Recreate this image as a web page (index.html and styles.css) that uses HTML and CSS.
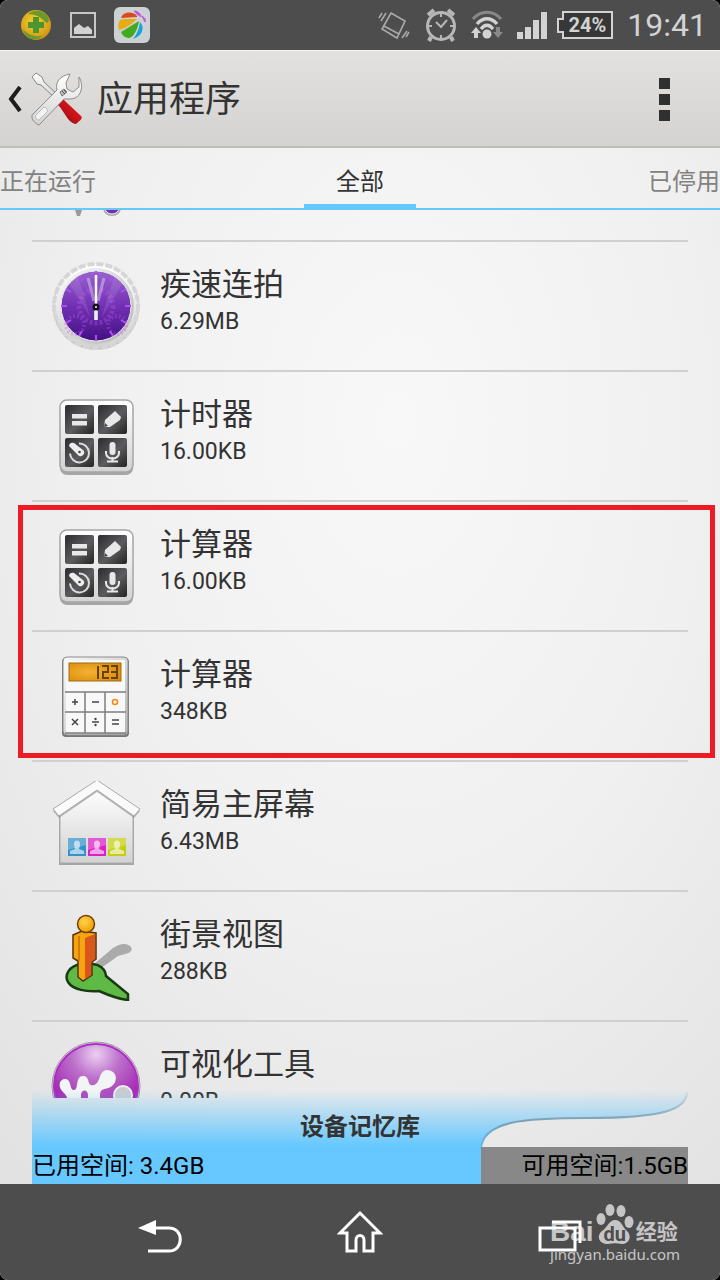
FILE: index.html
```html
<!DOCTYPE html>
<html lang="zh-CN">
<head>
<meta charset="utf-8">
<meta name="viewport" content="width=device-width, initial-scale=1">
<title>应用程序</title>
<link rel="stylesheet" href="styles.css">
</head>
<body>
<svg class="defs" width="0" height="0" aria-hidden="true">
  <defs>
    <linearGradient id="silver" x1="0" y1="0" x2="0" y2="1"><stop offset="0" stop-color="#fff"/><stop offset="1" stop-color="#d2d2d2"/></linearGradient>
    <linearGradient id="rim" x1="0" y1="0" x2="1" y2="1"><stop offset="0" stop-color="#fafafa"/><stop offset="1" stop-color="#b4b4b4"/></linearGradient>
    <linearGradient id="dark" x1="0" y1="0" x2="1" y2="1"><stop offset="0" stop-color="#2c2c2e"/><stop offset=".55" stop-color="#5c5c5e"/><stop offset="1" stop-color="#222"/></linearGradient>
    <linearGradient id="violet" x1="0" y1="0" x2="0" y2="1"><stop offset="0" stop-color="#9a63cf"/><stop offset=".5" stop-color="#7130b4"/><stop offset="1" stop-color="#431083"/></linearGradient>
    <radialGradient id="orb" cx=".5" cy=".12" r=".7"><stop offset="0" stop-color="#ecd0f0"/><stop offset=".4" stop-color="#bd72cb"/><stop offset="1" stop-color="#a01fae"/></radialGradient>
    <radialGradient id="lcd" cx=".4" cy=".5" r=".7"><stop offset="0" stop-color="#f2b234"/><stop offset="1" stop-color="#dd8b08"/></radialGradient>
    <radialGradient id="head" cx=".4" cy=".35" r=".7"><stop offset="0" stop-color="#ffd54a"/><stop offset="1" stop-color="#f09a00"/></radialGradient>
    <linearGradient id="red" x1="0" y1="1" x2="1" y2="0"><stop offset="0" stop-color="#7c0d10"/><stop offset=".6" stop-color="#d5141a"/><stop offset="1" stop-color="#95080d"/></linearGradient>
    <radialGradient id="gold" cx=".45" cy=".4" r=".6"><stop offset="0" stop-color="#f4d632"/><stop offset="1" stop-color="#d29414"/></radialGradient>
    <linearGradient id="water" x1="0" y1="0" x2="0" y2="1"><stop offset="0" stop-color="#66c8ff" stop-opacity="0"/><stop offset=".55" stop-color="#66c8ff" stop-opacity=".92"/><stop offset=".6" stop-color="#66c8ff"/><stop offset="1" stop-color="#66c8ff"/></linearGradient>
    <linearGradient id="edge" x1="0" y1="0" x2="0" y2="1"><stop offset="0" stop-color="#7ba9c1" stop-opacity=".15"/><stop offset=".5" stop-color="#7b9fb3"/><stop offset="1" stop-color="#66bdf0"/></linearGradient>
    <symbol id="toolbox" viewBox="0 0 90 90">
      <rect x="9" y="11" width="73" height="73" rx="7" fill="#888" opacity=".7"/>
      <rect x="9" y="9" width="73" height="72" rx="7" fill="url(#silver)" stroke="#a5a5a5" stroke-width="1.500"/>
      <g transform="translate(0 1)"><g fill="url(#dark)"><rect x="14" y="13" width="29" height="29" rx="2"/><rect x="47" y="13" width="29" height="29" rx="2"/><rect x="14" y="46" width="29" height="29" rx="2"/><rect x="47" y="46" width="29" height="29" rx="2"/></g>
      <g fill="#e8e8e8"><rect x="21" y="22" width="15" height="4.500"/><rect x="21" y="29" width="15" height="4.500"/>
      <path d="M53 35l1-7 10-9 6 6-1 3-10 7z"/><path d="M53 35l1-4 3 3z" fill="#444"/>
      <rect x="58.500" y="50" width="6" height="13" rx="3"/><rect x="56" y="68.500" width="11" height="2"/><rect x="60.500" y="65" width="2" height="4"/></g>
      <path d="M55 59v2a6.500 5.500 0 0 0 13 0v-2" fill="none" stroke="#e8e8e8" stroke-width="2"/>
      <path d="M28 51.500a9.500 9.500 0 1 1-9 10" fill="none" stroke="#ddd" stroke-width="2"/>
      <path d="M18 54c0-3 3-4 5-3l9 7a3.500 3.500 0 0 1-5 5z" fill="#eee"/><circle cx="28.500" cy="60" r="1.300" fill="#444"/></g>
    </symbol>
    <symbol id="person" viewBox="0 0 18 18"><rect width="18" height="18" fill="currentColor"/><path d="M0 0h18v7L0 12z" fill="#fff" opacity=".25"/><path d="M6 6a3 3.500 0 0 1 6 0c0 3-1 4-1 5l5 2v3H2v-3l5-2c0-1-1-2-1-5z" fill="#fff" opacity=".6"/></symbol>
  </defs>
</svg>
<div class="phone">
  <div class="status">
    <div class="status-group notices">
      <svg width="32" height="32" viewBox="0 0 32 32" aria-hidden="true"><circle cx="16" cy="16" r="15" fill="url(#gold)"/><path d="M8 5C16-2 29 3 29 12l-2 2C23 12 20 5 8 5zM3 20c5 6 11 8 20 7-7 6-18 4-20-7z" fill="#6a9a2a"/><path d="M13 8h6v5h5v6h-5v5h-6v-5H8v-6h5z" fill="#4e952f"/></svg>
      <svg width="26" height="26" viewBox="0 0 26 26" aria-hidden="true"><rect x="1" y="1" width="24" height="24" fill="none" stroke="#c7c7c7" stroke-width="2"/><path d="M4 22v-6l5-4 5 4 4-2 4 4v4z" fill="#d2d2d2"/></svg>
      <svg width="36" height="36" viewBox="0 0 36 36" aria-hidden="true"><rect width="36" height="36" rx="6" fill="#ccd1d4"/><path d="M7 11c2-7 13-7 16-2v1z" fill="#d74b1d"/><path d="M5 23c-2-8 1-11 5-11h13C18 17 10 22 5 23z" fill="#e7ac12"/><path d="M7 25l18-11c-1 8-6 17-10 17-4 0-7-3-8-6z" fill="#44a91d"/><path d="M26 15c5 5 3 14-7 17 5-6 6-11 7-17z" fill="#17a3d8"/><path d="M20 4c4 0 7 3 7 6-2-2-5-3-7-6zM28 9c3 2 4 4 3 6z" fill="#c553dc" stroke="#c553dc"/></svg>
    </div>
    <div class="status-group signals">
      <svg width="34" height="32" viewBox="0 0 32 32" fill="none" stroke="#aaa" stroke-width="1.600" aria-hidden="true"><path d="M13 4l14 8-8 17-15-9zM6 17l15 8M1 9l3-5M3 12l5-8M24 29l5-7M28 28l3-5"/></svg>
      <svg width="32" height="34" viewBox="0 0 32 34" fill="none" stroke="#b7b7b7" aria-hidden="true"><circle cx="16" cy="18" r="13.500" stroke-width="3"/><path d="M16 6v3M16 27v3M4 18h3M25 18h3M11 14l5 5 6-7" stroke-width="2"/><path d="M3 7l6-5M29 7l-6-5" stroke-width="4"/><path d="M6 29l-2 4M26 29l2 4" stroke-width="4"/></svg>
      <svg width="32" height="30" viewBox="0 0 32 30" fill="none" aria-hidden="true"><path d="M2 9c8-9 20-9 28 0" stroke="#888" stroke-width="3"/><path d="M6 14c6-7 14-7 20 0M10 19c4-5 8-5 12 0" stroke="#d3d3d3" stroke-width="3.400"/><circle cx="16" cy="24" r="4.500" fill="#d3d3d3"/><path d="M5 17l5 6H7v5H3v-5H0z" fill="#d3d3d3"/><path d="M27 28l5-6h-3v-5h-4v5h-3z" fill="#888"/></svg>
      <svg width="30" height="28" viewBox="0 0 30 28" fill="#d3d3d3" aria-hidden="true"><path d="M0 21h6v7H0zM8 16h6v12H8zM16 9h6v19h-6zM24 1h6v27h-6z"/></svg>
      <div class="battery"><svg width="56" height="28" viewBox="0 0 56 28" aria-hidden="true"><path d="M6 1h49v26H6v-6H1V8h5z" fill="#373737" stroke="#d3d3d3" stroke-width="2"/></svg><span>24%</span></div>
      <time class="clock">19:41</time>
    </div>
  </div>

  <header class="header">
    <button class="back" aria-label="返回">
      <svg width="14" height="26" viewBox="0 0 14 26" aria-hidden="true"><path d="M12 1L3 13l9 12" fill="none" stroke="#1d1d1d" stroke-width="4"/></svg>
      <svg width="54" height="54" viewBox="0 0 54 54" aria-hidden="true"><path d="M2 5l4-4 6 4 2 5 14 13-3 3L11 13l-4-1z" fill="url(#silver)" stroke="#888"/><path d="M27 32l5-6 4 4 15 14c2 2 0 4-5 8-3 0-6-3-8-5L30 35z" fill="url(#red)"/><path d="M2 43l25-25c-2-7 2-14 13-16l-4 9 1 6 6 3 6-5V5c5 8 3 22-9 22h-6L9 53c-2 0-7-5-7-7z" fill="url(#silver)" stroke="#8c8c8c"/><path d="M6 43l8-8c3 0 4 3 3 5l-8 8c-3 0-4-3-3-5z" fill="#f2f2f2" stroke="#aaa" stroke-width=".7"/><path d="M30 20l4-3 3 3-5 4z" fill="#bbb" stroke="#777"/><path d="M32 19l3 3M34 18l2 2" stroke="#555"/></svg>
    </button>
    <h1>应用程序</h1>
    <button class="more" aria-label="更多选项"><svg width="12" height="44" viewBox="0 0 12 44" aria-hidden="true"><path d="M1 1h11v11H1zM1 17h11v11H1zM1 33h11v11H1z" fill="#303030"/></svg></button>
  </header>

  <nav class="tabs" aria-label="应用分类">
    <button>正在运行</button>
    <button class="active" aria-current="true">全部</button>
    <button>已停用</button>
  </nav>

  <main class="list">
    <div class="row partial"><svg width="90" height="12" viewBox="0 0 90 12" aria-hidden="true"><path d="M24 0h7l-2 6h-3z" fill="#999"/><ellipse cx="61" cy="-2" rx="9" ry="8" fill="#aaa"/><ellipse cx="61" cy="-2" rx="7" ry="6" fill="#7d2cab" stroke="#eee"/></svg></div>
    <article class="row">
      <svg width="90" height="90" viewBox="0 0 90 90" aria-hidden="true"><circle cx="45" cy="46" r="43" fill="#c4c4c4"/><circle cx="45" cy="45" r="42" fill="url(#silver)" stroke="#d6d6d6" stroke-width="4" stroke-dasharray="7 2"/><circle cx="45" cy="45" r="38" fill="url(#rim)"/><circle cx="45" cy="45" r="35" fill="url(#violet)" stroke="#e6e6e6" stroke-width="1"/><g fill="none" stroke="#c75af0" opacity=".3"><circle cx="45" cy="45" r="17" stroke-width="5" stroke-dasharray="3 2"/><circle cx="24" cy="64" r="9" stroke-width="4" stroke-dasharray="2 2"/><circle cx="66" cy="64" r="9" stroke-width="4" stroke-dasharray="2 2"/></g><path d="M45 10v6M45 74v6M10 45h6M74 45h6M28 15l3 5M62 15l-3 5M15 28l5 3M75 28l-5 3M15 62l5-3M75 62l-5-3M28 75l3-5M62 75l-3-5" stroke="#a950ef" stroke-width="2"/><path d="M40 58l-22-36 9-7zM50 58l22-36-9-7z" fill="#fff" opacity=".1"/><path d="M43 40l-6-23M47 40l6-23" stroke="#fff" opacity=".35" stroke-width="3"/><path d="M45 14v45" stroke="#fff" stroke-width="2.500"/><path d="M45 50v9" stroke="#eee" stroke-width="3.500"/><circle cx="45" cy="46" r="3.500" fill="#111"/><circle cx="45" cy="46" r="1" fill="#fff"/></svg>
      <div class="info"><h2>疾速连拍</h2><p>6.29MB</p></div>
    </article>
    <article class="row">
      <svg width="90" height="90" aria-hidden="true"><use href="#toolbox"/></svg>
      <div class="info"><h2>计时器</h2><p>16.00KB</p></div>
    </article>
    <div class="marked">
      <article class="row">
        <svg width="90" height="90" aria-hidden="true"><use href="#toolbox"/></svg>
        <div class="info"><h2>计算器</h2><p>16.00KB</p></div>
      </article>
      <article class="row">
        <svg width="90" height="90" viewBox="0 0 90 90" aria-hidden="true"><rect x="11" y="7" width="67" height="79" rx="4" fill="#777"/><rect x="12" y="6" width="65" height="78" rx="4" fill="url(#rim)" stroke="#8d8d8d"/><rect x="15" y="9" width="59" height="73" fill="#f8f8f8"/><rect x="18" y="12" width="52" height="18" fill="url(#lcd)" stroke="#9c6a14"/><path d="M47 15v13M51 15h6v6h-5v6h6M60 15h6v12h-6M60 21h6" fill="none" stroke="#684009" stroke-width="2"/><path d="M14 41h61M14 61h61M34 41v41M54 41v41M14 82h61" stroke="#7d7d7d" stroke-width="1.500"/><path d="M21 51h6M24 48v6M41 51h7M21 68l6 6M27 68l-6 6M41 71h7M61 69h7M61 73h7" stroke="#444" stroke-width="1.500"/><circle cx="44.500" cy="68" r="1.200" fill="#444"/><circle cx="44.500" cy="74" r="1.200" fill="#444"/><circle cx="64" cy="51" r="2.500" fill="none" stroke="#f28b13" stroke-width="1.600"/></svg>
        <div class="info"><h2>计算器</h2><p>348KB</p></div>
      </article>
    </div>
    <article class="row">
      <svg width="90" height="90" viewBox="0 3 90 90" aria-hidden="true"><path d="M8 34L45 10l38 24v53H8z" fill="#777" opacity=".6"/><path d="M9 34L45 10l37 24v51H9z" fill="url(#silver)" stroke="#aaa"/><path d="M46 3l43 30-6 7L46 14 8 40l-6-7z" fill="#8a8a8a" opacity=".6"/><path d="M46 2l43 29-6 7L46 12 8 38l-6-7z" fill="#fafafa" stroke="#aaa"/><use href="#person" x="17" y="60" width="18" height="18" color="#3494c9"/><use href="#person" x="37" y="60" width="18" height="18" color="#dc20c5"/><use href="#person" x="57" y="60" width="18" height="18" color="#c4cf13"/></svg>
      <div class="info"><h2>简易主屏幕</h2><p>6.43MB</p></div>
    </article>
    <article class="row">
      <svg width="90" height="90" viewBox="0 0 90 90" aria-hidden="true"><path d="M42 54l20-17c8-5 14-5 18-1 3 6-6 7-13 9L46 60z" fill="#aaa"/><path d="M30 53c12-2 24 1 25 12l22 18v6c-10-1-20-5-29-9-12 1-26-1-31-9-4-7 1-16 13-18z" fill="#5fb945" stroke="#1a3a16" stroke-width="2.500"/><path d="M22 24l9-4 14 2v26l-4 3v13l-9 6-5-4V50l-5-3z" fill="#f6a510" stroke="#583009" stroke-width="1.500"/><path d="M34 27l10-4v25l-4 3v13l-6 4z" fill="#d9571c"/><path d="M28 25v25" stroke="#d47b0a" stroke-width="2"/><circle cx="35" cy="13" r="8.500" fill="url(#head)" stroke="#704008" stroke-width="1.500"/></svg>
      <div class="info"><h2>街景视图</h2><p>288KB</p></div>
    </article>
    <article class="row">
      <svg width="90" height="90" viewBox="0 0 90 90" aria-hidden="true"><circle cx="45" cy="45" r="44" fill="#ddd" stroke="#999"/><circle cx="45" cy="45" r="42" fill="url(#orb)" stroke="#b02cca" stroke-width="2"/><path d="M15 64c3-6 1-9-3-13-6-6-3-13 2-13 7 0 4 11 9 11 5 0 1-14 9-14 8 0 3 11 11 9 7-2 4-14 13-15 9 0 12 10 5 16-5 4-11 1-12 8v11H37V54c0-6-7-6-7 0v10z" fill="#f1f5f5"/><ellipse cx="72" cy="54" rx="9" ry="9" fill="#c8ccd2" stroke="#eee" stroke-width="2"/></svg>
      <div class="info"><h2>可视化工具</h2><p>0.00B</p></div>
    </article>
  </main>

  <section class="storage" aria-label="设备记忆库">
    <svg class="wave" viewBox="0 0 656 94" preserveAspectRatio="none" aria-hidden="true"><path d="M0 0H656C656 20 630 28 555 28C495 28 449 30 449 60V94H0z" fill="url(#water)"/><path d="M655 2C655 20 630 28 555 28C495 28 449 30 449 60" fill="none" stroke="url(#edge)" stroke-width="2"/></svg>
    <h2>设备记忆库</h2>
    <div class="usage"><span class="used">已用空间: 3.4GB</span><span class="free">可用空间:1.5GB</span></div>
  </section>

  <nav class="softkeys" aria-label="系统导航">
    <button aria-label="返回"><svg width="44" height="34" viewBox="0 0 44 34" aria-hidden="true"><path d="M0 8l18-8v15z" fill="#fff"/><path d="M16 8h15c15 0 15 23 0 23H10" fill="none" stroke="#fff" stroke-width="3"/></svg></button>
    <button aria-label="主屏幕"><svg width="46" height="44" viewBox="0 0 46 44" aria-hidden="true"><path d="M23 3L3 23h7v18h9V30c0-6 8-6 8 0v11h9V23h7z" fill="none" stroke="#fff" stroke-width="3"/></svg></button>
    <button aria-label="最近使用"><svg width="44" height="32" viewBox="0 0 44 32" fill="none" stroke="#fff" stroke-width="3" aria-hidden="true"><path d="M2 8h35v22H2zM14 2h28v21"/></svg></button>
    <div class="watermark">
      <div class="brand"><span class="latin">Bai</span>
        <span class="paw"><svg width="38" height="40" viewBox="0 0 38 40" fill="currentColor" aria-hidden="true"><ellipse cx="5" cy="15" rx="4.500" ry="6"/><ellipse cx="14" cy="6" rx="4.500" ry="6"/><ellipse cx="25" cy="7" rx="4.500" ry="6"/><ellipse cx="33" cy="18" rx="4.500" ry="6"/><path d="M19 16c6 0 7 6 11 10 7 6 3 14-4 14-5-1-9-1-14 0-9 0-12-8-6-13 6-4 7-11 13-11z"/></svg><b>du</b></span>
        <span class="han">经验</span></div>
      <div class="site">jingyan.baidu.com</div>
    </div>
  </nav>
</div>
</body>
</html>
```

FILE: styles.css
```css
* { box-sizing: border-box; }

body {
  margin: 0;
  background: #000;
  color: #333;
  font-family: Roboto, "Noto Sans CJK SC", sans-serif;
  font-size: 24px;
}

h1, h2, p { margin: 0; font-weight: 400; }
button { border: 0; padding: 0; background: none; color: inherit; font: inherit; }
svg { display: block; flex: none; }
.defs { position: absolute; }

.phone {
  display: flex;
  flex-direction: column;
  height: 100vh;
  overflow: hidden;
  border-radius: 8px;
  background: radial-gradient(ellipse 85% 75% at 55% 33%, #f8f8f8, #f0f0f0 50%, #e2e2e2);
}

.status {
  display: flex;
  justify-content: space-between;
  align-items: center;
  height: 50px;
  flex: none;
  padding: 0 13px 0 20px;
  background: #4d4d4d;
  color: #d3d3d3;
}
.status-group { display: flex; align-items: center; }
.notices { gap: 18px; }
.signals { gap: 14px; }
.battery { display: grid; place-items: center; margin-left: -4px; }
.battery > * { grid-area: 1 / 1; }
.battery span { padding-left: 4px; font-size: 20px; font-weight: 700; line-height: 24px; }
.clock { font-size: 32px; line-height: 48px; }

.header {
  display: flex;
  align-items: center;
  height: 98px;
  flex: none;
  padding: 0 50px 0 8px;
  background: linear-gradient(#e2e1df, #d4d3d1);
  border-top: 1px solid #f5f5f5;
  border-bottom: 2px solid #bdbdbb;
}
.back { display: flex; align-items: center; gap: 8px; }
.header h1 { flex: 1; padding: 2px 0 0 13px; font-size: 36px; line-height: 48px; }
.more { padding-left: 20px; }

.tabs {
  display: grid;
  grid-template-columns: 1fr 112px 1fr;
  height: 62px;
  flex: none;
  border-bottom: 2px solid #66c8ff;
  color: #828282;
  line-height: 36px;
}
.tabs button { padding-top: 8px; text-align: left; }
.tabs button:last-child { text-align: right; }
.tabs .active { border-bottom: 4px solid #66c8ff; padding-top: 12px; color: #333; text-align: center; }

.list { flex: 1; min-height: 0; padding: 0 32px; overflow-y: auto; scrollbar-width: none; }
.row {
  display: flex;
  align-items: center;
  gap: 19px;
  height: 130px;
  padding-left: 19px;
  border-bottom: 2px solid #d0d0d0;
}
.partial { height: 32px; align-items: flex-start; }
.info { align-self: flex-start; padding-top: 23px; }
.info h2 { font-size: 31px; line-height: 40px; }
.info p { font-size: 23px; line-height: 34px; }

.marked { position: relative; }
.marked::after {
  content: "";
  position: absolute;
  inset: 3px -27px 4px -14px;
  border: 5px solid #ed1c24;
  pointer-events: none;
}

.storage { position: relative; flex: none; margin: -8px 32px 0; padding-top: 18px; }
.wave { position: absolute; inset: 0; width: 100%; height: 100%; }
.storage h2 { position: relative; font-size: 24px; font-weight: 700; line-height: 39px; text-align: center; }
.usage { position: relative; display: grid; grid-template-columns: 449fr 207fr; color: #000; line-height: 36px; }
.usage span { padding-top: 1px; }
.free { background: #888; text-align: right; }

.softkeys {
  position: relative;
  display: grid;
  grid-template-columns: repeat(3, 1fr);
  height: 96px;
  flex: none;
  padding: 0 60px;
  background: #4d4d4d;
}
.softkeys button { display: grid; place-items: center; }
.softkeys button:first-child { padding-top: 10px; }
.softkeys button:last-of-type { padding-top: 8px; }

.watermark {
  position: absolute;
  right: 40px;
  bottom: 16px;
  color: #fff;
  opacity: .68;
}
.brand { display: flex; align-items: flex-end; gap: 2px; line-height: 24px; }
.latin { font-family: "Liberation Sans", sans-serif; font-size: 28px; font-weight: 700; }
.paw { display: grid; justify-items: center; align-items: end; }
.paw > * { grid-area: 1 / 1; }
.paw b { color: #4d4d4d; font-size: 20px; line-height: 20px; }
.han { font-size: 21px; font-weight: 700; }
.site { font-family: "Noto Sans", sans-serif; font-size: 15px; line-height: 20px; }
```
